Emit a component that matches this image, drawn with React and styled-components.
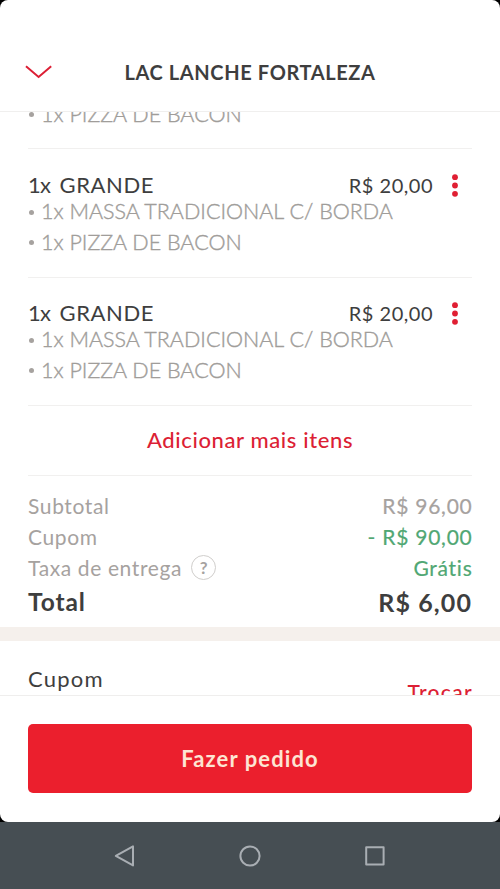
import styled, { createGlobalStyle } from 'styled-components';

// the list is scrolled: only the tail of the first item is still visible
const scrolledOption = '1x PIZZA DE BACON';

const items = [1, 2].map(id => ({
  id,
  name: 'GRANDE',
  price: 'R$ 20,00',
  options: ['1x MASSA TRADICIONAL C/ BORDA', '1x PIZZA DE BACON'],
}));

export default () => (
  <Screen>
    <GlobalStyle />
    <Sheet>
      <Header>
        <CloseIcon viewBox="0 0 28 14">
          <path d="M2 1.2 L14.6 12 L27.2 1.2" />
        </CloseIcon>
        <Title>LAC LANCHE FORTALEZA</Title>
      </Header>
      <Content>
        <Items>
          <ScrolledItem>
            <Option>
              <Bullet />
              {scrolledOption}
            </Option>
          </ScrolledItem>
          {items.map(item => (
            <Item key={item.id}>
              <ItemHead>
                <Quantity>1x</Quantity>
                <ItemName>{item.name}</ItemName>
                <Price>{item.price}</Price>
                <MoreIcon viewBox="0 0 6 23">
                  <circle cx="3" cy="3.2" r="2.9" />
                  <circle cx="3" cy="11.5" r="2.9" />
                  <circle cx="3" cy="19.8" r="2.9" />
                </MoreIcon>
              </ItemHead>
              {item.options.map(option => (
                <Option key={option}>
                  <Bullet />
                  {option}
                </Option>
              ))}
            </Item>
          ))}
        </Items>
        <AddMore>Adicionar mais itens</AddMore>
        <Summary>
          <SummaryRow>
            <Label>Subtotal</Label>
            <Amount>R$ 96,00</Amount>
          </SummaryRow>
          <SummaryRow>
            <Label>Cupom</Label>
            <Amount $green>- R$ 90,00</Amount>
          </SummaryRow>
          <SummaryRow>
            <Label>Taxa de entrega</Label>
            <Help>?</Help>
            <Amount $green>Grátis</Amount>
          </SummaryRow>
          <TotalRow>
            <TotalLabel>Total</TotalLabel>
            <TotalAmount>R$ 6,00</TotalAmount>
          </TotalRow>
        </Summary>
        <Coupon>
          <CouponTitle>Cupom</CouponTitle>
          <CouponAction>Trocar</CouponAction>
        </Coupon>
      </Content>
      <Footer>
        <OrderButton>Fazer pedido</OrderButton>
      </Footer>
    </Sheet>
    <NavBar>
      <NavIcon viewBox="0 0 22 22">
        <path d="M19 1.4 V20.4 L1.8 10.9 Z" />
      </NavIcon>
      <NavIcon viewBox="0 0 22 22">
        <circle cx="11" cy="11" r="9.6" />
      </NavIcon>
      <NavIcon viewBox="0 0 22 22">
        <rect x="2.2" y="2.2" width="17.4" height="17.4" />
      </NavIcon>
    </NavBar>
  </Screen>
);

const GlobalStyle = createGlobalStyle`
  * {
    box-sizing: border-box;
  }
  body {
    margin: 0;
    font-family: Lato, "Open Sans", sans-serif;
    font-variant-ligatures: none;
    color: #3e3e3e;
  }
`;

const Screen = styled.div`
  width: 500px;
  height: 889px;
  display: flex;
  flex-direction: column;
  background: #000;
  overflow: hidden;
`;

const Sheet = styled.div`
  height: 822px;
  display: flex;
  flex-direction: column;
  background: #fff;
  border-radius: 8px;
  overflow: hidden;
`;

const Header = styled.header`
  flex: none;
  height: 112px;
  padding: 33px 24px 0;
  display: grid;
  grid-template-columns: 28px 1fr 28px;
  align-items: center;
  border-bottom: 1px solid #f0efee;
`;

const CloseIcon = styled.svg`
  width: 28px;
  height: 14px;
  fill: none;
  stroke: #dc1f35;
  stroke-width: 2;
`;

const Title = styled.h1`
  margin: 0;
  font-size: 20px;
  font-weight: 700;
  letter-spacing: 0.62px;
  line-height: 24px;
  text-align: center;
  white-space: nowrap;
`;

const Content = styled.main`
  flex: 1;
  min-height: 0;
  overflow: hidden;
`;

const Items = styled.div`
  margin: 0 28px;
`;

const ScrolledItem = styled.div`
  height: 37.25px;
  display: flex;
  align-items: flex-start;
  border-bottom: 1px solid #f1f0ef;

  > div {
    margin-top: -13.5px;
  }
`;

const Item = styled.div`
  height: 128.25px;
  padding-top: 24px;
  border-bottom: 1px solid #f1f0ef;
`;

const ItemHead = styled.div`
  height: 22.5px;
  display: flex;
  align-items: center;
  line-height: 24px;
`;

const Quantity = styled.span`
  width: 31.5px;
  font-size: 22px;
  letter-spacing: -0.8px;
`;

const ItemName = styled.span`
  flex: 1;
  font-size: 22px;
  letter-spacing: 0.6px;
`;

const Price = styled.span`
  font-size: 20px;
  letter-spacing: 0.5px;
`;

const MoreIcon = styled.svg`
  width: 6px;
  height: 23px;
  margin: 1px 14px 0 19px;
  fill: #e01f33;
`;

const Option = styled.div`
  height: 30.5px;
  display: flex;
  align-items: center;
  font-size: 21.5px;
  font-weight: 300;
  line-height: 30px;
  color: #a09d9a;
  white-space: nowrap;
  -webkit-text-stroke: 0.4px;
`;

const Bullet = styled.i`
  width: 5px;
  height: 5px;
  margin: 2px 7px 0 1px;
  border-radius: 50%;
  background: #a6a29f;
`;

const AddMore = styled.div`
  height: 70px;
  margin: 0 28px;
  border-bottom: 1px solid #f1f0ef;
  font-size: 22px;
  font-weight: 500;
  letter-spacing: 0.62px;
  line-height: 67px;
  text-align: center;
  color: #dc1f35;
`;

const Summary = styled.section`
  height: 151px;
  padding: 14px 28px 0;
`;

const SummaryRow = styled.div`
  height: 31px;
  display: flex;
  align-items: center;
  line-height: 31px;
`;

const Label = styled.span`
  font-size: 21px;
  letter-spacing: 0.62px;
  color: #a6a29f;
`;

const Help = styled.span`
  width: 25px;
  height: 25px;
  margin-left: 9px;
  border: 1.5px solid #d0cecc;
  border-radius: 50%;
  font-size: 17px;
  font-weight: 700;
  line-height: 23px;
  text-align: center;
  color: #a6a29f;
`;

const Amount = styled.span`
  margin: 0 -0.5px 0 auto;
  font-size: 21px;
  letter-spacing: 0.75px;
  color: ${({ $green }) => ($green ? '#50a773' : '#a6a29f')};
  -webkit-text-stroke: 0.2px;
`;

const TotalRow = styled.div`
  height: 38px;
  display: flex;
  align-items: center;
  justify-content: space-between;
  line-height: 38px;
`;

const TotalLabel = styled.span`
  font-size: 24.5px;
  font-weight: 700;
  letter-spacing: 0.9px;
`;

const TotalAmount = styled.span`
  font-size: 25px;
  font-weight: 700;
  letter-spacing: 1.1px;
`;

const Coupon = styled.section`
  height: 120px;
  padding: 24px 28px 0;
  display: flex;
  justify-content: space-between;
  border-top: 14px solid #f5f0ec;
`;

const CouponTitle = styled.span`
  font-size: 22px;
  letter-spacing: 1.2px;
  line-height: 28px;
`;

const CouponAction = styled.span`
  margin-right: -1px;
  padding-top: 13px;
  font-size: 21px;
  font-weight: 500;
  letter-spacing: 1.3px;
  line-height: 28px;
  color: #dc1f35;
`;

const Footer = styled.footer`
  flex: none;
  height: 127px;
  padding: 28px 28px 0;
  border-top: 1px solid #efeeed;
`;

const OrderButton = styled.button`
  width: 100%;
  height: 69px;
  padding: 0 0 1px;
  border: 0;
  border-radius: 5px;
  background: #eb1f2d;
  color: #fde5d3;
  font-family: inherit;
  font-size: 22px;
  font-weight: 700;
  letter-spacing: 1.1px;
`;

const NavBar = styled.nav`
  flex: 1;
  display: flex;
  justify-content: center;
  align-items: center;
  gap: 103px;
  background: #464e53;
`;

const NavIcon = styled.svg`
  width: 22px;
  height: 22px;
  fill: none;
  stroke: #a9aeb3;
  stroke-width: 2;
  stroke-linejoin: round;
`;
